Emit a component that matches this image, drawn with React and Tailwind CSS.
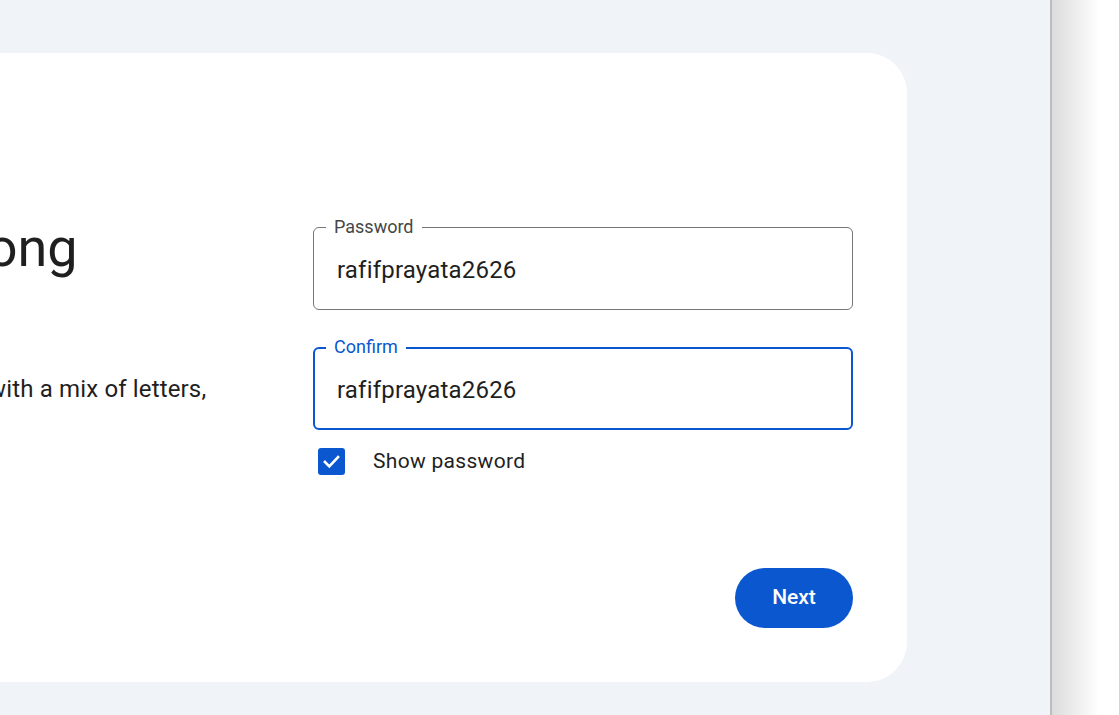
import { useState } from "react";

const font = { fontFamily: "Roboto, 'Noto Sans', sans-serif" };

function OutlinedField({ label, value, focused }) {
  return (
    <div
      className={
        "relative h-[83px] rounded-[6px] flex items-center " +
        (focused ? "border-2 border-[#0b57d0] pl-[22px]" : "border border-[#747775] pl-[23px]")
      }
    >
      <span
        className={
          "absolute px-[8px] bg-white text-[18px] leading-[22px] " +
          (focused ? "top-[-13px] left-[11px] text-[#0b57d0]" : "top-[-12px] left-[12px] text-[#444746]")
        }
      >
        {label}
      </span>
      <input
        className="w-full bg-transparent outline-none text-[24px] tracking-[0.2px] text-[#1f1f1f] mt-[2px]"
        style={font}
        defaultValue={value}
      />
    </div>
  );
}

export default function App() {
  const [show, setShow] = useState(true);

  return (
    <div className="flex h-[715px] w-full bg-[#f0f4f9]" style={font}>
      <main className="flex-1 overflow-hidden">
        {/* card, left part runs off the screen */}
        <div className="ml-[-344px] mt-[53px] w-[1251px] h-[629px] bg-white rounded-[40px] flex flex-col pt-[162px] px-[54px] pb-[54px]">
          <div className="flex gap-[63px]">
            <div className="w-[540px] shrink-0">
              <h1 className="text-[54px] leading-[66px] font-normal text-[#1f1f1f]">
                Create a strong password
              </h1>
              <p className="mt-[24px] text-[24px] leading-[36px] tracking-[0.15px] text-[#1f1f1f]">
                Use 8 or more characters with a mix of letters, numbers &amp; symbols
              </p>
            </div>
            <div className="flex-1 pt-[12px]">
              <OutlinedField label="Password" value="rafifprayata2626" />
              <div className="mt-[37px]">
                <OutlinedField label="Confirm" value="rafifprayata2626" focused />
              </div>
              <label className="mt-[16px] flex items-center gap-[28px] pl-[5px] cursor-pointer">
                <button
                  type="button"
                  onClick={() => setShow((s) => !s)}
                  className={
                    "w-[27px] h-[27px] rounded-[3px] flex items-center justify-center " +
                    (show ? "bg-[#0b57d0]" : "border-2 border-[#444746]")
                  }
                >
                  {show && (
                    <svg width="21" height="21" viewBox="0 0 24 24" fill="none">
                      <path
                        d="M4.5 12.5l5 5L19.5 7"
                        stroke="white"
                        strokeWidth="3"
                        strokeLinecap="square"
                      />
                    </svg>
                  )}
                </button>
                <span className="text-[21px] tracking-[0.3px] text-[#1f1f1f]">Show password</span>
              </label>
            </div>
          </div>
          <div className="flex-1" />
          <div className="flex justify-end">
            <button className="w-[118px] h-[60px] rounded-full bg-[#0b57d0] text-white text-[21px] font-medium">
              Next
            </button>
          </div>
        </div>
      </main>
      <aside className="w-[69px] border-l-2 border-[#bdbdbd] bg-linear-to-r from-[#dcdcdc] to-white to-70%" />
    </div>
  );
}
